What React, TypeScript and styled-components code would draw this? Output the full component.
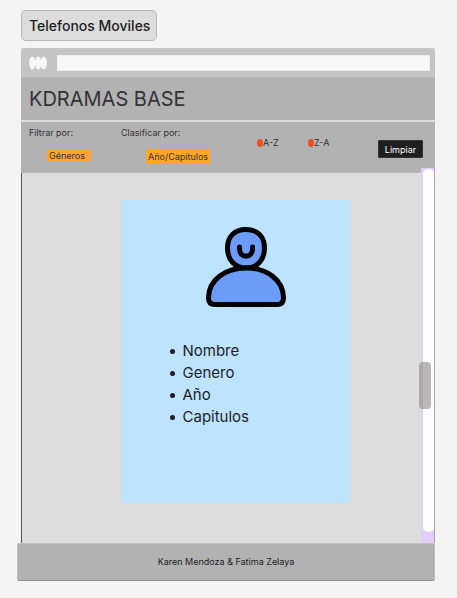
import React from "react";
import styled, { createGlobalStyle } from "styled-components";

const GlobalStyle = createGlobalStyle`
  * { box-sizing: border-box; }
  body {
    margin: 0;
    background: #f4f4f4;
    color: #1e1e1e;
    font-family: Inter, "Liberation Sans", sans-serif;
  }
`;

const Page = styled.main`
  display: flex;
  flex-direction: column;
  align-items: flex-start;
  gap: 7px;
  padding: 10px 22px 17px 21px;
`;

const Tag = styled.div`
  padding: 0 6px 0 7px;
  border: 1px solid #b9b9b9;
  border-radius: 5px;
  background: #dcdcdc;
  font-size: 14px;
  font-weight: 500;
  line-height: 29px;
`;

const Frame = styled.div`
  align-self: stretch;
  display: flex;
  flex-direction: column;
`;

const BrowserBar = styled.div`
  display: flex;
  align-items: center;
  gap: 10px;
  height: 29px;
  padding: 0 5px 0 8px;
  border-radius: 2px 2px 0 0;
  background: #c4c4c4;
`;

const Dots = styled.svg`
  flex: none;
  width: 18px;
  height: 14px;
  fill: #f8f8f8;
`;

const Address = styled.input`
  flex: 1;
  min-width: 0;
  height: 16px;
  padding: 0 4px;
  border: 1px solid #eeeeee;
  background: #f8f8f8;
  font: inherit;
  font-size: 9px;
`;

const Title = styled.h1`
  margin: 0;
  padding: 0 8px;
  border-top: 1px solid #bababa;
  background: #b2b2b2;
  color: #333333;
  font-size: 20px;
  font-weight: 400;
  line-height: 42px;
`;

const Filters = styled.form`
  display: grid;
  grid-template-columns: 92fr 136fr 51fr 70fr auto;
  height: 53px;
  padding: 0 12px 0 8px;
  border-top: 2px solid #dddddd;
  border-bottom: 1px solid #bababa;
  background: #b2b2b2;
  font-size: 9px;
  line-height: 11px;
`;

const Field = styled.div`
  display: flex;
  flex-direction: column;
  align-items: flex-start;
  padding-top: 5px;
  color: #333333;
`;

const Choice = styled.select<{ $large?: boolean }>`
  appearance: none;
  width: ${(p) => (p.$large ? 64 : 44)}px;
  height: ${(p) => (p.$large ? 15 : 11)}px;
  margin: ${(p) => (p.$large ? "11px 0 0 25px" : "12px 0 0 18px")};
  padding: 0 0 0 2px;
  border: 0;
  border-radius: 0;
  background: #ffa629;
  color: #333333;
  font: inherit;
`;

const Order = styled.label`
  display: flex;
  align-items: center;
  align-self: start;
  padding-top: 15px;
  color: #333333;
`;

const Radio = styled.input`
  appearance: none;
  width: 6px;
  height: 8px;
  margin: 0;
  border-radius: 50%;
  background: #f24e1e;
`;

const Clear = styled.button`
  align-self: start;
  width: 45px;
  height: 18px;
  margin-top: 18px;
  padding: 0;
  border: 1px solid #333333;
  border-radius: 1px;
  background: #1e1e1e;
  color: #ffffff;
  font: inherit;
`;

const Body = styled.div`
  display: flex;
  justify-content: space-between;
  border-left: 1px solid #555555;
  border-right: 1px solid #a6a6a6;
  background: #dddddd;
`;

const Content = styled.section`
  flex: 1;
  display: flex;
  justify-content: center;
  padding: 27px 0 40px 28px;
`;

const Card = styled.article`
  display: flex;
  flex-direction: column;
  align-items: center;
  width: 228px;
  padding: 25px 0 75px;
  background: #bde3ff;
`;

const Avatar = styled.svg`
  width: 82px;
  height: 84px;
  margin-left: 21px;
`;

const Facts = styled.ul`
  align-self: stretch;
  margin: 31px 0 0;
  padding: 0 0 0 48px;
  list-style: none;
  font-size: 15px;
  line-height: 22px;
`;

const Fact = styled.li`
  display: flex;
  align-items: center;
  gap: 8px;

  &::before {
    content: "";
    width: 5px;
    height: 5px;
    border-radius: 50%;
    background: #1e1e1e;
  }
`;

const Track = styled.div`
  position: relative;
  width: 13px;
  margin-top: -5px;
  padding: 1px 0 11px 2px;
  background: #e4ccff;
`;

const Rail = styled.div`
  height: 100%;
  border-radius: 5px;
  background: #ffffff;
`;

const Thumb = styled.div`
  position: absolute;
  top: 194px;
  left: -2px;
  width: 12px;
  height: 47px;
  border-radius: 4px;
  background: rgba(128, 128, 128, 0.55);
`;

const Footer = styled.footer`
  margin-left: -4px;
  border: 1px solid #bfbfbf;
  border-bottom-color: #929292;
  border-radius: 2px;
  background: #b2b2b2;
  font-size: 9px;
  line-height: 36px;
  text-align: center;
`;

export default function App() {
  return (
    <>
      <GlobalStyle />
      <Page>
        <Tag>Telefonos Moviles</Tag>
        <Frame>
          <BrowserBar>
            <Dots viewBox="0 0 18 14" aria-hidden="true">
              <ellipse cx="3.3" cy="7" rx="3.2" ry="6.5" />
              <ellipse cx="9.2" cy="7" rx="3.2" ry="6.5" />
              <ellipse cx="14.8" cy="7" rx="3.2" ry="6.5" />
            </Dots>
            <Address type="text" aria-label="Dirección" />
          </BrowserBar>
          <Title>KDRAMAS BASE</Title>
          <Filters>
            <Field>
              <label htmlFor="genre">Filtrar por:</label>
              <Choice id="genre">
                <option>Géneros</option>
              </Choice>
            </Field>
            <Field>
              <label htmlFor="sort">Clasificar por:</label>
              <Choice id="sort" $large>
                <option>Año/Capítulos</option>
              </Choice>
            </Field>
            <Order>
              <Radio type="radio" name="order" value="az" />
              A-Z
            </Order>
            <Order>
              <Radio type="radio" name="order" value="za" />
              Z-A
            </Order>
            <Clear type="reset">Limpiar</Clear>
          </Filters>
          <Body>
            <Content>
              <Card>
                <Avatar
                  viewBox="0 0 82 84"
                  fill="#6b9cf7"
                  stroke="#000000"
                  strokeWidth="5"
                  strokeLinecap="round"
                  strokeLinejoin="round"
                  aria-hidden="true"
                >
                  <path d="M41 4.500C29 4.500 22.500 12 22.500 23C22.500 35 30 43 41 43C52 43 59.500 35 59.500 23C59.500 12 53 4.500 41 4.500Z" />
                  <path d="M41 43C20 43 3.500 55 3.500 73Q3.500 79.500 10 79.500H72Q78.500 79.500 78.500 73C78.500 55 62 43 41 43Z" />
                  <path d="M34.500 22V24C34.500 33.500 47.500 33.500 47.500 24V22" fill="none" />
                </Avatar>
                <Facts>
                  <Fact>Nombre</Fact>
                  <Fact>Genero</Fact>
                  <Fact>Año</Fact>
                  <Fact>Capitulos</Fact>
                </Facts>
              </Card>
            </Content>
            <Track>
              <Rail />
              <Thumb />
            </Track>
          </Body>
          <Footer>Karen Mendoza &amp; Fatima Zelaya</Footer>
        </Frame>
      </Page>
    </>
  );
}
